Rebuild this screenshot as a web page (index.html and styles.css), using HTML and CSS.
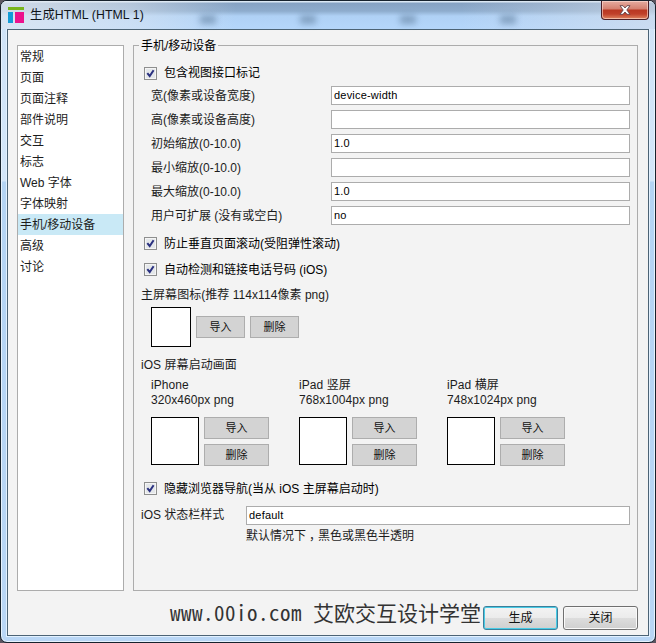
FILE: index.html
```html
<!DOCTYPE html>
<html lang="zh-CN">
<head>
<meta charset="utf-8">
<title>生成HTML (HTML 1)</title>
<link rel="stylesheet" href="styles.css">
</head>
<body>
<div class="window">
  <header class="titlebar">
    <svg class="logo" width="16" height="16" viewBox="0 0 16 16"><path fill="#78b51b" d="M0 0h16v3H0z"/><path fill="#139bd7" d="M0 5h5v11H0z"/><path fill="#ec128d" d="M7 5h9v11H7z"/></svg>
    <h1>生成HTML (HTML 1)</h1>
    <i class="smudge s1"></i><i class="smudge s2"></i><i class="smudge s3"></i><i class="smudge s4"></i>
    <button class="close" aria-label="关闭窗口"><svg width="12" height="10" viewBox="0 0 12 10"><path d="M1 .7h3L6 3 8 .7h3L7.8 5 11 9.3H8L6 7 4 9.3H1L4.2 5z" fill="#fff" stroke="#62434a" stroke-width=".9"/></svg></button>
  </header>
  <main class="client">
    <div class="panes">
      <nav class="sidebar">
        <a>常规</a><a>页面</a><a>页面注释</a><a>部件说明</a><a>交互</a><a>标志</a><a>Web 字体</a><a>字体映射</a><a class="selected">手机/移动设备</a><a>高级</a><a>讨论</a>
      </nav>
      <section class="group">
        <h2>手机/移动设备</h2>
        <label class="check first"><span class="box"><svg width="9" height="9" viewBox="0 0 9 9"><path d="M1.3 4.2 3.7 7 7.6 1.2"/></svg></span>包含视图接口标记</label>
        <div class="fields">
          <div class="field"><span>宽(像素或设备宽度)</span><div class="input">device-width</div></div>
          <div class="field"><span>高(像素或设备高度)</span><div class="input"></div></div>
          <div class="field"><span>初始缩放(0-10.0)</span><div class="input">1.0</div></div>
          <div class="field"><span>最小缩放(0-10.0)</span><div class="input"></div></div>
          <div class="field"><span>最大缩放(0-10.0)</span><div class="input">1.0</div></div>
          <div class="field"><span>用户可扩展 (没有或空白)</span><div class="input">no</div></div>
        </div>
        <label class="check"><span class="box"><svg width="9" height="9" viewBox="0 0 9 9"><path d="M1.3 4.2 3.7 7 7.6 1.2"/></svg></span>防止垂直页面滚动(受阻弹性滚动)</label>
        <label class="check"><span class="box"><svg width="9" height="9" viewBox="0 0 9 9"><path d="M1.3 4.2 3.7 7 7.6 1.2"/></svg></span>自动检测和链接电话号码 (iOS)</label>
        <p class="caption">主屏幕图标(推荐 114x114像素 png)</p>
        <div class="icon-row"><div class="thumb small"></div><button class="flat">导入</button><button class="flat">删除</button></div>
        <p class="caption splash">iOS 屏幕启动画面</p>
        <div class="screens">
          <div class="screen"><p>iPhone<br>320x460px png</p><div class="picker"><div class="thumb"></div><div class="stack"><button class="flat">导入</button><button class="flat">删除</button></div></div></div>
          <div class="screen"><p>iPad 竖屏<br>768x1004px png</p><div class="picker"><div class="thumb"></div><div class="stack"><button class="flat">导入</button><button class="flat">删除</button></div></div></div>
          <div class="screen"><p>iPad 横屏<br>748x1024px png</p><div class="picker"><div class="thumb"></div><div class="stack"><button class="flat">导入</button><button class="flat">删除</button></div></div></div>
        </div>
        <label class="check hide-nav"><span class="box"><svg width="9" height="9" viewBox="0 0 9 9"><path d="M1.3 4.2 3.7 7 7.6 1.2"/></svg></span>隐藏浏览器导航(当从 iOS 主屏幕启动时)</label>
        <div class="status"><span>iOS 状态栏样式</span><div class="input">default</div></div>
        <p class="hint">默认情况下<span class="comma">，</span>黑色或黑色半透明</p>
      </section>
    </div>
    <footer class="footer">
      <div class="credit"><span class="site">www.00io.com </span>艾欧交互设计学堂</div>
      <button class="action primary">生成</button><button class="action">关闭</button>
    </footer>
  </main>
</div>
</body>
</html>
```
FILE: styles.css
```css
* { box-sizing: border-box; }
body { margin: 0; background: #5b5560; font: 12px/15px "Liberation Sans", "Noto Sans CJK SC", sans-serif; color: #1c1c1c; }
h1, h2, p { margin: 0; font-size: 12px; font-weight: 400; }
button { padding: 0; font: inherit; color: #111; }

.window {
  width: 656px; height: 643px; padding: 0 6px;
  border: 1px solid #17222d; border-radius: 7px;
  background: linear-gradient(#cfe3f7 0, #d3e6f9 180px, #b4d4f4 181px, #b9d6f5 100%);
  box-shadow: inset 0 0 0 1px #e6f2fd;
  overflow: hidden;
}
.titlebar {
  position: relative; display: flex; align-items: center;
  height: 28px; margin: 0 -6px; padding: 0 0 0 7px;
  background: linear-gradient(90deg, rgba(226,233,241,.8) 0, rgba(226,233,241,.5) 130px, transparent 235px, transparent 460px, rgba(218,225,235,.6) 100%), linear-gradient(#dbe8f4 0, #dbe8f4 1px, #86a2c3 2px, #8eaccd 10px, #afd1f5 15px, #b5d6fb 100%);
}
.titlebar h1 { margin: 0 0 0 6px; color: #101419; font-size: 12.3px; letter-spacing: .1px; }
.smudge { position: absolute; top: 14px; width: 16px; height: 9px; background: #6f8eae; filter: blur(3px); opacity: .7; }
.s1 { left: 199px; }
.s2 { left: 299px; }
.s3 { left: 399px; }
.s4 { left: 499px; }
.close {
  position: absolute; top: 0; right: 6px; width: 48px; height: 19px;
  display: flex; align-items: center; justify-content: center;
  border: 1px solid #4b1f27; border-top: 0; border-radius: 0 0 4px 4px;
  background: linear-gradient(#e5aca0 0, #d4806f 8px, #b93722 9px, #c0402a 13px, #df8460 100%);
  box-shadow: inset 0 0 0 1px rgba(255,225,215,.6);
}

.client { height: 607px; padding: 15px 10px 0 9px; background: #f3f3f3; border: 1px solid #4c6375; box-shadow: 0 0 0 1px #e2f1ff; }
.panes { display: flex; gap: 9px; height: 546px; }
.sidebar { width: 107px; background: #fff; border: 1px solid #acacac; }
.sidebar a { display: block; height: 21px; padding-left: 2px; line-height: 23px; }
.sidebar .selected { background: #c9e9f6; }

.group { flex: 1; border: 1px solid #acacac; padding: 0 7px; }
.group h2 { width: max-content; height: 16px; margin: -8px 0 0 -2px; padding: 0 2px; line-height: 16px; background: #f3f3f3; color: #000; }
.check { display: flex; align-items: center; gap: 7px; height: 26px; padding-left: 3px; color: #000; }
.check.first { height: 24px; margin-top: 7px; }
.box { display: flex; align-items: center; justify-content: center; width: 13px; height: 13px; margin-bottom: 1px; border: 1px solid #8e8f8f; background: #e4e7ea; box-shadow: inset 0 0 0 1px #f5f5f5; }
.first .box { margin: 1px 0 0; }
.box path { fill: none; stroke: #2b3180; stroke-width: 2; }
.field { display: flex; align-items: center; height: 24px; padding-left: 10px; }
.field span { width: 180px; }
.input { flex: 1; height: 19px; padding-left: 2px; border: 1px solid #acacac; background: #fff; color: #000; font-size: 11px; line-height: 17px; letter-spacing: .2px; }
.field .input { margin-bottom: 1px; }
.fields { margin-bottom: 3px; margin-top: -1px; }
.caption { height: 24px; line-height: 25px; letter-spacing: .05px; }
.icon-row { display: flex; align-items: center; gap: 5px; padding-left: 10px; }
.thumb { width: 48px; height: 48px; border: 1px solid #000; background: #fff; }
.thumb.small { width: 40px; height: 40px; }
.flat { width: 49px; height: 22px; border: 1px solid #adadad; background: #d3d3d3; font-size: 11px; line-height: 20px; }
.caption.splash { height: 30px; line-height: 36px; }
.screens { display: flex; padding-left: 10px; }
.screen { width: 148px; }
.screen p { height: 40px; padding-top: 1px; letter-spacing: .08px; }
.picker { display: flex; gap: 5px; }
.stack { display: flex; flex-direction: column; gap: 5px; }
.stack .flat { width: 65px; }
.hide-nav { margin-top: 10px; }
.status { display: flex; align-items: center; height: 19px; margin-top: 4px; }
.status span { width: 105px; }
.hint { height: 20px; padding-left: 105px; line-height: 20px; }
.comma { margin: 0 3px; font-family: "Noto Sans CJK SC", sans-serif; font-feature-settings: "halt"; }

.footer { display: flex; align-items: center; gap: 5px; height: 39px; padding-top: 15px; }
.credit { flex: 1; min-width: 0; margin: -12px 0 0 153px; height: 26px; line-height: 26px; font-family: "Noto Sans CJK SC", sans-serif; font-size: 21px; color: #333; white-space: nowrap; }
.site { font-feature-settings: "hwid"; letter-spacing: .5px; white-space: pre; }
.action { flex: none; width: 75px; height: 24px; border: 1px solid #707070; border-radius: 3px; background: linear-gradient(#f3f3f3 0, #ebebeb 50%, #dddddd 51%, #cfcfcf 100%); box-shadow: inset 0 0 0 1px #fafafa; }
.action.primary { border-color: #3c7f9b; box-shadow: inset 0 0 0 1px #48cbe5; }
```
